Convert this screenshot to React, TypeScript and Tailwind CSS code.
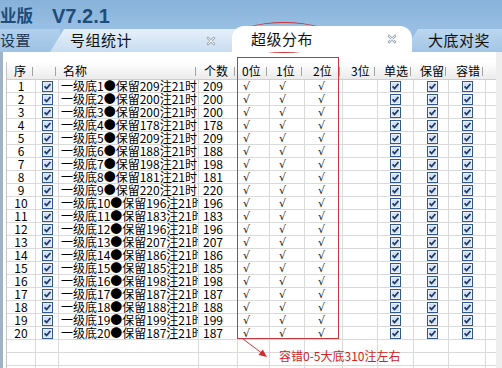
import React from 'react'

const counts = [209, 200, 200, 178, 209, 188, 198, 181, 220, 196, 183, 196, 207, 186, 185, 198, 187, 188, 199, 187]

const grid = 'grid grid-cols-[29px_23px_140px_39px_32px_35px_38px_35px_36px_35px_37px_11px]'

const headers = [
  { label: '序', pad: 'pl-[7px]' },
  { label: '', pad: 'pl-[6px]' },
  { label: '名称', pad: 'pl-[4px]' },
  { label: '个数', pad: 'pl-[5px]' },
  { label: '0位', pad: 'pl-[4px]' },
  { label: '1位', pad: 'pl-[6px]' },
  { label: '2位', pad: 'pl-[8px]' },
  { label: '3位', pad: 'pl-[8px]' },
  { label: '单选', pad: 'pl-[6px]' },
  { label: '保留', pad: 'pl-[6px]' },
  { label: '容错', pad: 'pl-[7px]' },
]

function Box() {
  return (
    <svg width="11" height="11" viewBox="0 0 11 11">
      <rect x="0.5" y="0.5" width="10" height="10" fill="#d6e2f3" stroke="#34578a" />
      <rect x="1.5" y="1.5" width="8" height="8" fill="none" stroke="#eef3fb" strokeWidth="0.8" />
      <path d="M2.6 5.3 L4.6 7.5 L8.4 3" fill="none" stroke="#1d3a66" strokeWidth="1.8" />
    </svg>
  )
}

function CloseX() {
  return (
    <svg width="10" height="10" viewBox="0 0 10 10">
      <path d="M2 2 L8 8 M8 2 L2 8" stroke="#a9b3bd" strokeWidth="2.6" strokeLinecap="round" />
      <path d="M2.3 2.3 L7.7 7.7 M7.7 2.3 L2.3 7.7" stroke="#f4f6f8" strokeWidth="0.9" strokeLinecap="round" />
    </svg>
  )
}

function Tick({ pad }: { pad: string }) {
  return (
    <div className={`border-r border-[#dadada] ${pad} font-['DejaVu_Sans',sans-serif] text-[11px] leading-[13px] text-[#1a1a1a]`}>
      √
    </div>
  )
}

function Cell({ children, className = '' }: { children?: React.ReactNode; className?: string }) {
  return <div className={`whitespace-nowrap border-r border-[#dadada] ${className}`}>{children}</div>
}

function DataRow({ n, c }: { n: number; c: number }) {
  return (
    <div className={`${grid} h-[13px] border-b border-[#dadada] text-[12px] leading-[12px] text-black`}>
      <Cell className="text-center">{n}</Cell>
      <Cell className="flex items-center justify-center">
        <Box />
      </Cell>
      <Cell className="overflow-hidden pl-[2px]">
        一级底{n}●保留{c}注21时
      </Cell>
      <Cell className="pl-[4px]">{c}</Cell>
      <Tick pad="pl-[5px]" />
      <Tick pad="pl-[9px]" />
      <Tick pad="pl-[13px]" />
      <Cell />
      <Cell className="flex items-center justify-center">
        <Box />
      </Cell>
      <Cell className="flex items-center justify-center pl-[2px]">
        <Box />
      </Cell>
      <Cell className="flex items-center justify-center">
        <Box />
      </Cell>
      <Cell />
    </div>
  )
}

function EmptyRow() {
  return (
    <div className={`${grid} h-[13px] border-b border-[#dadada]`}>
      {Array.from({ length: 12 }).map((_, i) => (
        <Cell key={i} />
      ))}
    </div>
  )
}

export default function App() {
  return (
    <div className="relative h-[368px] w-[502px] overflow-hidden bg-[#93bbe0] font-['Noto_Sans_CJK_SC',sans-serif]">
      {/* title */}
      <div className="flex h-[27px] items-start bg-gradient-to-b from-[#87b1d9] to-[#98bfe3] pt-[5px] font-bold text-[#1f4c7b]">
        <span className="text-[16.5px] leading-[20px]">业版</span>
        <span className="ml-[19px] pt-[1px] font-['Liberation_Sans',sans-serif] text-[20px] leading-[20px]">V7.2.1</span>
      </div>

      {/* tabs */}
      <div className="flex h-[25px] items-end bg-[#98bfe3]">
        <div className="flex h-[23px] w-[60px] items-center bg-gradient-to-b from-[#b0cfeb] to-[#9fc3e5] text-[15px] tracking-[0.5px] text-[#1c3652]">
          设置
        </div>
        <div className="ml-[-10px] flex h-[23px] w-[190px] items-center rounded-tl-[6px] bg-gradient-to-b from-[#e6f0fa] to-[#c9ddf1] pl-[20px] pr-[24px] text-[15px] tracking-[0.5px] text-[#111] [clip-path:polygon(14px_0,100%_0,100%_100%,0_100%)]">
          <span>号组统计</span>
          <span className="ml-auto flex">
            <CloseX />
          </span>
        </div>
        <div className="z-10 ml-[-8px] flex h-[26px] w-[180px] items-center rounded-t-[12px] bg-white pl-[19px] pr-[15px] text-[15px] tracking-[0.5px] text-[#111]">
          <span>超级分布</span>
          <span className="ml-auto flex">
            <CloseX />
          </span>
        </div>
        <div className="ml-[-8px] flex h-[23px] flex-1 items-center rounded-tl-[8px] bg-gradient-to-b from-[#bcd7ef] to-[#a2c5e6] pl-[24px] text-[15px] tracking-[0.5px] text-[#111] [clip-path:polygon(14px_0,100%_0,100%_100%,0_100%)]">
          大底对奖
        </div>
      </div>

      {/* panel */}
      <div className="flex h-[316px] bg-white">
        <div className="w-[3px] bg-[#9fb2c6]" />
        <div className="ml-[3px] mt-[10px] w-[490px] border-l border-[#c4c4c4]">
          <div className={`${grid} h-[18px] border-b border-[#cfcfcf] bg-gradient-to-b from-white to-[#ebebeb] text-[12px] text-black`}>
            {headers.map((h, i) => (
              <div key={i} className={`flex items-center justify-between ${h.pad} pr-[3px]`}>
                <span>{h.label}</span>
                <span className="h-[9px] w-px bg-[#a3a3a3]" />
              </div>
            ))}
            <div />
          </div>
          {counts.map((c, i) => (
            <DataRow key={i} n={i + 1} c={c} />
          ))}
          <EmptyRow />
          <EmptyRow />
          <EmptyRow />
        </div>
        <div className="flex-1 bg-[#eeeeee]" />
      </div>

      {/* annotations */}
      <div className="pointer-events-none absolute left-[235px] top-[22px] h-[31px] w-[98px] rounded-[50%] border border-[#c8363a]" />
      <div className="pointer-events-none absolute left-[237px] top-[57px] h-[282px] w-[102px] border border-[#c8363a]" />
      <svg className="pointer-events-none absolute left-[238px] top-[336px]" width="34" height="26" viewBox="0 0 34 26">
        <path d="M5 3 L23 16.5" stroke="#c8363a" strokeWidth="1" />
        <polygon points="29,21 20.5,19 24.7,13.4" fill="#d42a2a" />
      </svg>
      <div className="absolute left-[279px] top-[348px] text-[12px] leading-[16px] text-[#cc2424]">容错0-5大底310注左右</div>
    </div>
  )
}
